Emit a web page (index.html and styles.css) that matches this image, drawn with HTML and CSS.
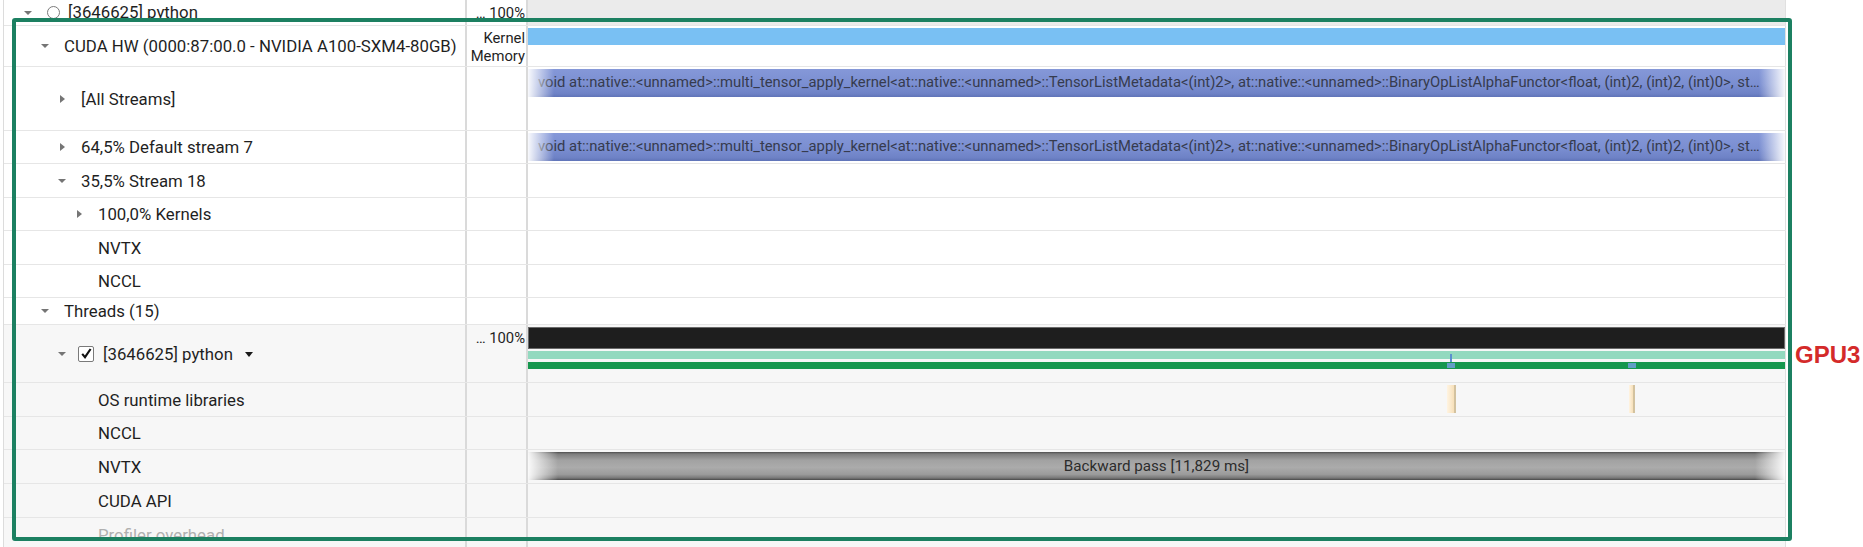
FILE: index.html
```html
<!DOCTYPE html>
<html>
<head>
<meta charset="utf-8">
<link rel="stylesheet" href="styles.css">
</head>
<body>
<div class="view">
  <div class="row h26">
    <div class="name l0"><span class="slot"><span class="tri-down"></span></span><span class="radio"></span><span class="lbl">[3646625] python</span></div>
    <div class="pct">… 100%</div>
    <div class="tl tl-gray"></div>
  </div>
  <div class="row h41">
    <div class="name l1"><span class="slot"><span class="tri-down"></span></span><span class="lbl">CUDA HW (0000:87:00.0 - NVIDIA A100-SXM4-80GB)</span></div>
    <div class="pct two"><span>Kernel</span><span>Memory</span></div>
    <div class="tl"><div class="bar bar-blue"></div></div>
  </div>
  <div class="row h64">
    <div class="name l2"><span class="slot"><span class="tri-right"></span></span><span class="lbl">[All Streams]</span></div>
    <div class="pct"></div>
    <div class="tl"><div class="bar bar-kernel">void at::native::&lt;unnamed&gt;::multi_tensor_apply_kernel&lt;at::native::&lt;unnamed&gt;::TensorListMetadata&lt;(int)2&gt;, at::native::&lt;unnamed&gt;::BinaryOpListAlphaFunctor&lt;float, (int)2, (int)2, (int)0&gt;, st…</div></div>
  </div>
  <div class="row h33">
    <div class="name l2"><span class="slot"><span class="tri-right"></span></span><span class="lbl">64,5% Default stream 7</span></div>
    <div class="pct"></div>
    <div class="tl"><div class="bar bar-kernel">void at::native::&lt;unnamed&gt;::multi_tensor_apply_kernel&lt;at::native::&lt;unnamed&gt;::TensorListMetadata&lt;(int)2&gt;, at::native::&lt;unnamed&gt;::BinaryOpListAlphaFunctor&lt;float, (int)2, (int)2, (int)0&gt;, st…</div></div>
  </div>
  <div class="row h34">
    <div class="name l2"><span class="slot"><span class="tri-down"></span></span><span class="lbl">35,5% Stream 18</span></div>
    <div class="pct"></div>
    <div class="tl"></div>
  </div>
  <div class="row h33">
    <div class="name l3"><span class="slot"><span class="tri-right"></span></span><span class="lbl">100,0% Kernels</span></div>
    <div class="pct"></div>
    <div class="tl"></div>
  </div>
  <div class="row h34">
    <div class="name leaf"><span class="lbl">NVTX</span></div>
    <div class="pct"></div>
    <div class="tl"></div>
  </div>
  <div class="row h33">
    <div class="name leaf"><span class="lbl">NCCL</span></div>
    <div class="pct"></div>
    <div class="tl"></div>
  </div>
  <div class="row h27">
    <div class="name l1"><span class="slot"><span class="tri-down"></span></span><span class="lbl">Threads (15)</span></div>
    <div class="pct"></div>
    <div class="tl"></div>
  </div>
  <div class="row h58 shade">
    <div class="name l2"><span class="slot"><span class="tri-down"></span></span><span class="check"><svg width="13" height="13" viewBox="0 0 13 13"><path d="M2.2 6.8 L5 10.2 L10.6 2" fill="none" stroke="#111" stroke-width="2.1"/></svg></span><span class="lbl">[3646625] python</span><span class="caret"></span></div>
    <div class="pct top">… 100%</div>
    <div class="tl">
      <div class="bar-black"></div>
      <div class="bar-lgreen"><span class="stem" style="left:922px"></span></div>
      <div class="bar-dgreen"><span class="mark" style="left:919px"></span><span class="mark" style="left:1100px"></span></div>
    </div>
  </div>
  <div class="row h34 shade">
    <div class="name leaf"><span class="lbl">OS runtime libraries</span></div>
    <div class="pct"></div>
    <div class="tl"><span class="osr" style="left:919px;width:9px"></span><span class="osr" style="left:1101px;width:6px"></span></div>
  </div>
  <div class="row h33 shade">
    <div class="name leaf"><span class="lbl">NCCL</span></div>
    <div class="pct"></div>
    <div class="tl"></div>
  </div>
  <div class="row h34 shade">
    <div class="name leaf"><span class="lbl">NVTX</span></div>
    <div class="pct"></div>
    <div class="tl"><div class="bar bar-nvtx">Backward pass [11,829 ms]</div></div>
  </div>
  <div class="row h34 shade">
    <div class="name leaf"><span class="lbl">CUDA API</span></div>
    <div class="pct"></div>
    <div class="tl"></div>
  </div>
  <div class="row h34 shade">
    <div class="name leaf"><span class="lbl dim">Profiler overhead</span></div>
    <div class="pct"></div>
    <div class="tl"></div>
  </div>
</div>
<div class="highlight"></div>
<div class="gpu-label">GPU3</div>
</body>
</html>
```

FILE: styles.css
```css
* { box-sizing: border-box; }
html, body { margin: 0; padding: 0; }
body {
  width: 1863px;
  height: 547px;
  overflow: hidden;
  position: relative;
  background: #ffffff;
  font-family: Roboto, "Liberation Sans", Arial, sans-serif;
  color: #1f1f1f;
}
.view {
  margin-left: 3px;
  border-left: 1px solid #dcdcdc;
  width: 1783px;
}
.row {
  display: grid;
  grid-template-columns: 463px 61px 1258px;
  border-bottom: 1px solid #e6e6e6;
  background: #ffffff;
}
.row.shade { background: #f7f7f7; }
.h26 { height: 26px; }
.h27 { height: 27px; }
.h33 { height: 33px; }
.h34 { height: 34px; }
.h41 { height: 41px; }
.h58 { height: 58px; }
.h64 { height: 64px; }

.name {
  display: flex;
  align-items: center;
  font-size: 16.8px;
  white-space: nowrap;
  border-right: 2px solid #dadada;
  overflow: hidden;
}
.l0 { padding-left: 20px; }
.l1 { padding-left: 37px; }
.l2 { padding-left: 54px; }
.l3 { padding-left: 71px; }
.leaf { padding-left: 94px; }
.slot {
  width: 8px;
  height: 10px;
  display: flex;
  align-items: center;
  justify-content: center;
  margin-right: 15px;
  flex: none;
}
.tri-down {
  width: 0; height: 0;
  border-left: 4px solid transparent;
  border-right: 4px solid transparent;
  border-top: 4px solid #757575;
}
.tri-right {
  width: 0; height: 0;
  border-top: 4px solid transparent;
  border-bottom: 4px solid transparent;
  border-left: 5px solid #757575;
}
.radio {
  width: 13px;
  height: 13px;
  border: 1.3px solid #7b7b7b;
  border-radius: 50%;
  margin-right: 8px;
  flex: none;
}
.l0 .lbl { position: relative; top: -1px; }
.check {
  width: 16px;
  height: 16px;
  border: 1px solid #7a7a7a;
  border-radius: 2px;
  background: #ffffff;
  display: flex;
  align-items: center;
  justify-content: center;
  margin-left: -3px;
  margin-right: 9px;
  flex: none;
}
.caret {
  width: 0; height: 0;
  border-left: 4.5px solid transparent;
  border-right: 4.5px solid transparent;
  border-top: 5px solid #1a1a1a;
  margin-left: 12px;
  margin-top: 2px;
}
.dim { color: #b0b0b0; }

.pct {
  border-right: 2px solid #dadada;
  font-size: 14.8px;
  display: flex;
  flex-direction: column;
  justify-content: center;
  align-items: flex-end;
  padding-right: 1px;
  white-space: nowrap;
  line-height: 18px;
}
.pct.top { justify-content: flex-start; padding-top: 4px; }
.pct.two { line-height: 18px; padding-top: 1px; }

.tl {
  position: relative;
  border-right: 1px solid #e0e0e0;
  padding-top: 2px;
}
.tl-gray { background: #ebebeb; }

.bar {
  height: 28px;
  position: relative;
  overflow: hidden;
  white-space: nowrap;
}
.bar-blue {
  height: 17px;
  background: #79c0f3;
}
.bar-kernel {
  background: linear-gradient(#8598d8, #7a8ed1 55%, #6e82c6 88%, #6074b8);
  color: #363b4e;
  font-size: 14.8px;
  line-height: 26px;
  padding-left: 10px;
}
.bar-kernel::before,
.bar-nvtx::before {
  content: "";
  position: absolute;
  left: 0; top: 0; bottom: 0;
  width: 26px;
  background: linear-gradient(to right, rgba(255,255,255,0.95), rgba(255,255,255,0));
}
.bar-kernel::after,
.bar-nvtx::after {
  content: "";
  position: absolute;
  right: 0; top: 0; bottom: 0;
  width: 26px;
  background: linear-gradient(to left, rgba(255,255,255,0.95), rgba(255,255,255,0));
}
.bar-nvtx {
  background: linear-gradient(#4c4c4c 0, #7d7d7d 2px, #a2a2a2 30%, #ababab 55%, #9b9b9b 80%, #777 93%, #474747 100%);
  color: #2c2c2c;
  font-size: 15.2px;
  line-height: 28px;
  text-align: center;
}
.bar-nvtx::before, .bar-nvtx::after { width: 30px; }

.bar-black {
  height: 22px;
  background: #1e1e1e;
  box-shadow: inset 0 0 0 1px #6a6a6a;
  margin-bottom: 2px;
}
.bar-lgreen {
  position: relative;
  height: 8px;
  background: #93d9bf;
  margin-bottom: 3px;
}
.bar-dgreen {
  position: relative;
  height: 7px;
  background: #16974e;
}
.stem {
  position: absolute;
  top: 3px;
  width: 2px;
  height: 8px;
  background: #5b8fcf;
}
.mark {
  position: absolute;
  top: 1px;
  width: 8px;
  height: 5px;
  background: #6f9fdc;
  opacity: 0.85;
}
.osr {
  position: absolute;
  top: 2px;
  height: 28px;
  background: linear-gradient(to right, #fff4e2, #f7e0b9);
  border-right: 2px solid #d3c29f;
}

.highlight {
  position: absolute;
  left: 12px;
  top: 18px;
  width: 1780px;
  height: 523px;
  border: 4px solid #1c8061;
  border-radius: 3px;
  pointer-events: none;
}
.gpu-label {
  position: absolute;
  left: 1795px;
  top: 343px;
  font-family: "Liberation Sans", Arial, sans-serif;
  font-weight: bold;
  font-size: 24px;
  line-height: 24px;
  color: #d42a2a;
}
```
